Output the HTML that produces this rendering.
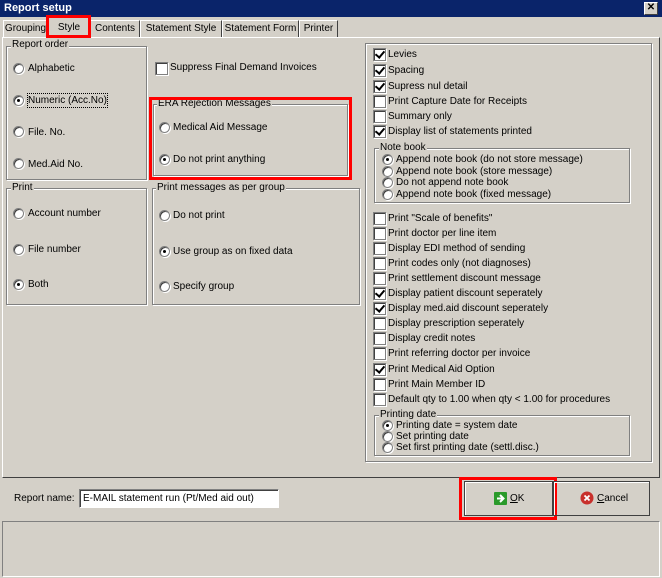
<!DOCTYPE html>
<html><head><meta charset="utf-8"><style>
*{box-sizing:border-box;margin:0;padding:0}
body{width:662px;height:578px;background:#d4d0c8;font:10px "Liberation Sans",sans-serif;color:#000;position:relative;overflow:hidden}
.a{position:absolute;white-space:nowrap}
.g{position:absolute;border:1px solid #808080;box-shadow:1px 1px 0 #fff, inset 1px 1px 0 #fff}
.gl{position:absolute;background:#d4d0c8;padding:0 1px;line-height:12px;white-space:nowrap}
.r{position:absolute;width:11px;height:11px;border-radius:50%;background:#fff;border:1px solid #808080;box-shadow:inset 1px 1px 0 #404040,1px 1px 0 #fff}
.r.on::after{content:"";position:absolute;left:3px;top:3px;width:3px;height:3px;border-radius:50%;background:#000}
.c{position:absolute;width:13px;height:13px;background:#fff;border:1px solid #808080;box-shadow:inset 1px 1px 0 #404040,1px 1px 0 #fff}
.c.on::after{content:"";position:absolute;left:3px;top:0px;width:4px;height:7px;border:solid #000;border-width:0 2px 2px 0;transform:rotate(40deg)}
.t{position:absolute;line-height:13px;white-space:nowrap}
.red{position:absolute;border:3px solid #f00}
.tab{position:absolute;top:20px;height:17px;border:1px solid #fff;border-bottom:none;border-right:1px solid #404040;line-height:15px;text-align:center;white-space:nowrap}
</style></head><body>
<div class="a" style="left:0;top:0;width:662px;height:17px;background:#0a246a;"></div>
<div class="a" style="left:4px;top:2px;color:#fff;font-weight:bold;font-size:11px;line-height:13px">Report setup</div>
<div class="a" style="left:644px;top:2px;width:14px;height:13px;background:#d4d0c8;border:1px solid #fff;border-right-color:#404040;border-bottom-color:#404040;font-size:10px;line-height:10px;text-align:center;font-weight:bold">✕</div>

<div class="a" style="left:2px;top:37px;width:658px;height:441px;border:1px solid #fff;border-right-color:#404040;border-bottom-color:#404040"></div>
<div class="tab" style="left:3px;width:45px">Grouping</div>
<div class="tab" style="left:48px;top:17px;width:42px;height:21px;background:#d4d0c8;padding-top:2px">Style</div>
<div class="tab" style="left:90px;width:50px">Contents</div>
<div class="tab" style="left:140px;width:82px">Statement Style</div>
<div class="tab" style="left:222px;width:77px">Statement Form</div>
<div class="tab" style="left:299px;width:39px">Printer</div>
<div class="red" style="left:46px;top:15px;width:45px;height:23px"></div>

<div class="g" style="left:6px;top:46px;width:141px;height:134px"></div><div class="gl" style="left:11px;top:39px">Report order</div>
<div class="r" style="left:13px;top:63px"></div><div class="t" style="left:28px;top:62px">Alphabetic</div>
<div class="r on" style="left:13px;top:95px"></div><div class="t" style="left:28px;top:94px;outline:1px dotted #000">Numeric (Acc.No)</div>
<div class="r" style="left:13px;top:126px"></div><div class="t" style="left:28px;top:126px">File. No.</div>
<div class="r" style="left:13px;top:158px"></div><div class="t" style="left:28px;top:158px">Med.Aid No.</div>

<div class="c" style="left:155px;top:62px"></div><div class="t" style="left:170px;top:61px">Suppress Final Demand Invoices</div>

<div class="g" style="left:153px;top:104px;width:195px;height:72px"></div><div class="gl" style="left:157px;top:98px">ERA Rejection Messages</div>
<div class="r" style="left:159px;top:122px"></div><div class="t" style="left:173px;top:121px">Medical Aid Message</div>
<div class="r on" style="left:159px;top:154px"></div><div class="t" style="left:173px;top:153px">Do not print anything</div>
<div class="red" style="left:149px;top:97px;width:203px;height:83px"></div>

<div class="g" style="left:6px;top:188px;width:141px;height:117px"></div><div class="gl" style="left:11px;top:182px">Print</div>
<div class="r" style="left:13px;top:208px"></div><div class="t" style="left:28px;top:207px">Account number</div>
<div class="r" style="left:13px;top:244px"></div><div class="t" style="left:28px;top:243px">File number</div>
<div class="r on" style="left:13px;top:279px"></div><div class="t" style="left:28px;top:278px">Both</div>

<div class="g" style="left:152px;top:188px;width:208px;height:117px"></div><div class="gl" style="left:156px;top:182px">Print messages as per group</div>
<div class="r" style="left:159px;top:210px"></div><div class="t" style="left:173px;top:209px">Do not print</div>
<div class="r on" style="left:159px;top:246px"></div><div class="t" style="left:173px;top:245px">Use group as on fixed data</div>
<div class="r" style="left:159px;top:281px"></div><div class="t" style="left:173px;top:280px">Specify group</div>

<div class="g" style="left:365px;top:43px;width:287px;height:419px"></div>
<div class="c on" style="left:373px;top:48px"></div><div class="t" style="left:388px;top:48px">Levies</div>
<div class="c on" style="left:373px;top:64px"></div><div class="t" style="left:388px;top:64px">Spacing</div>
<div class="c on" style="left:373px;top:80px"></div><div class="t" style="left:388px;top:80px">Supress nul detail</div>
<div class="c" style="left:373px;top:95px"></div><div class="t" style="left:388px;top:95px">Print Capture Date for Receipts</div>
<div class="c" style="left:373px;top:110px"></div><div class="t" style="left:388px;top:110px">Summary only</div>
<div class="c on" style="left:373px;top:125px"></div><div class="t" style="left:388px;top:125px">Display list of statements printed</div>

<div class="g" style="left:374px;top:148px;width:256px;height:55px"></div><div class="gl" style="left:379px;top:142px">Note book</div>
<div class="r on" style="left:382px;top:154px"></div><div class="t" style="left:396px;top:153px">Append note book (do not store message)</div>
<div class="r" style="left:382px;top:166px"></div><div class="t" style="left:396px;top:165px">Append note book (store message)</div>
<div class="r" style="left:382px;top:177px"></div><div class="t" style="left:396px;top:176px">Do not append note book</div>
<div class="r" style="left:382px;top:189px"></div><div class="t" style="left:396px;top:188px">Append note book (fixed message)</div>

<div class="c" style="left:373px;top:212px"></div><div class="t" style="left:388px;top:212px">Print "Scale of benefits"</div>
<div class="c" style="left:373px;top:227px"></div><div class="t" style="left:388px;top:227px">Print doctor per line item</div>
<div class="c" style="left:373px;top:242px"></div><div class="t" style="left:388px;top:242px">Display EDI method of sending</div>
<div class="c" style="left:373px;top:257px"></div><div class="t" style="left:388px;top:257px">Print codes only (not diagnoses)</div>
<div class="c" style="left:373px;top:272px"></div><div class="t" style="left:388px;top:272px">Print settlement discount message</div>
<div class="c on" style="left:373px;top:287px"></div><div class="t" style="left:388px;top:287px">Display patient discount seperately</div>
<div class="c on" style="left:373px;top:302px"></div><div class="t" style="left:388px;top:302px">Display med.aid discount seperately</div>
<div class="c" style="left:373px;top:317px"></div><div class="t" style="left:388px;top:317px">Display prescription seperately</div>
<div class="c" style="left:373px;top:332px"></div><div class="t" style="left:388px;top:332px">Display credit notes</div>
<div class="c" style="left:373px;top:347px"></div><div class="t" style="left:388px;top:347px">Print referring doctor per invoice</div>
<div class="c on" style="left:373px;top:363px"></div><div class="t" style="left:388px;top:363px">Print Medical Aid Option</div>
<div class="c" style="left:373px;top:378px"></div><div class="t" style="left:388px;top:378px">Print Main Member ID</div>
<div class="c" style="left:373px;top:393px"></div><div class="t" style="left:388px;top:393px">Default qty to 1.00 when qty &lt; 1.00 for procedures</div>

<div class="g" style="left:374px;top:415px;width:256px;height:41px"></div><div class="gl" style="left:379px;top:409px">Printing date</div>
<div class="r on" style="left:382px;top:420px"></div><div class="t" style="left:396px;top:419px">Printing date = system date</div>
<div class="r" style="left:382px;top:431px"></div><div class="t" style="left:396px;top:430px">Set printing date</div>
<div class="r" style="left:382px;top:442px"></div><div class="t" style="left:396px;top:441px">Set first printing date (settl.disc.)</div>

<div class="t" style="left:14px;top:492px">Report name:</div>
<div class="a" style="left:79px;top:489px;width:200px;height:19px;background:#fff;border:1px solid #808080;border-right-color:#fff;border-bottom-color:#fff;box-shadow:inset 1px 1px 0 #404040;padding:2px 3px;line-height:13px">E-MAIL statement run (Pt/Med aid out)</div>

<div class="a" style="left:464px;top:481px;width:89px;height:35px;border:1px solid #404040;box-shadow:inset 1px 1px 0 #fff"></div>
<svg class="a" style="left:494px;top:492px" width="13" height="13"><rect width="13" height="13" rx="1" fill="#2a9a2a"/><path d="M3 6.5h6M6 3l3.5 3.5L6 10" stroke="#fff" stroke-width="2" fill="none"/></svg>
<div class="t" style="left:510px;top:492px"><u>O</u>K</div>
<div class="red" style="left:459px;top:477px;width:98px;height:43px"></div>
<div class="a" style="left:553px;top:481px;width:97px;height:35px;border:1px solid #404040;box-shadow:inset 1px 1px 0 #fff"></div>
<svg class="a" style="left:580px;top:491px" width="14" height="14"><circle cx="7" cy="7" r="6.5" fill="#c8302c"/><path d="M4.5 4.5l5 5M9.5 4.5l-5 5" stroke="#fff" stroke-width="1.8"/></svg>
<div class="t" style="left:597px;top:492px"><u>C</u>ancel</div>

<div class="a" style="left:2px;top:521px;width:658px;height:56px;border:1px solid #808080;border-right-color:#fff;border-bottom-color:#fff"></div>
</body></html>
